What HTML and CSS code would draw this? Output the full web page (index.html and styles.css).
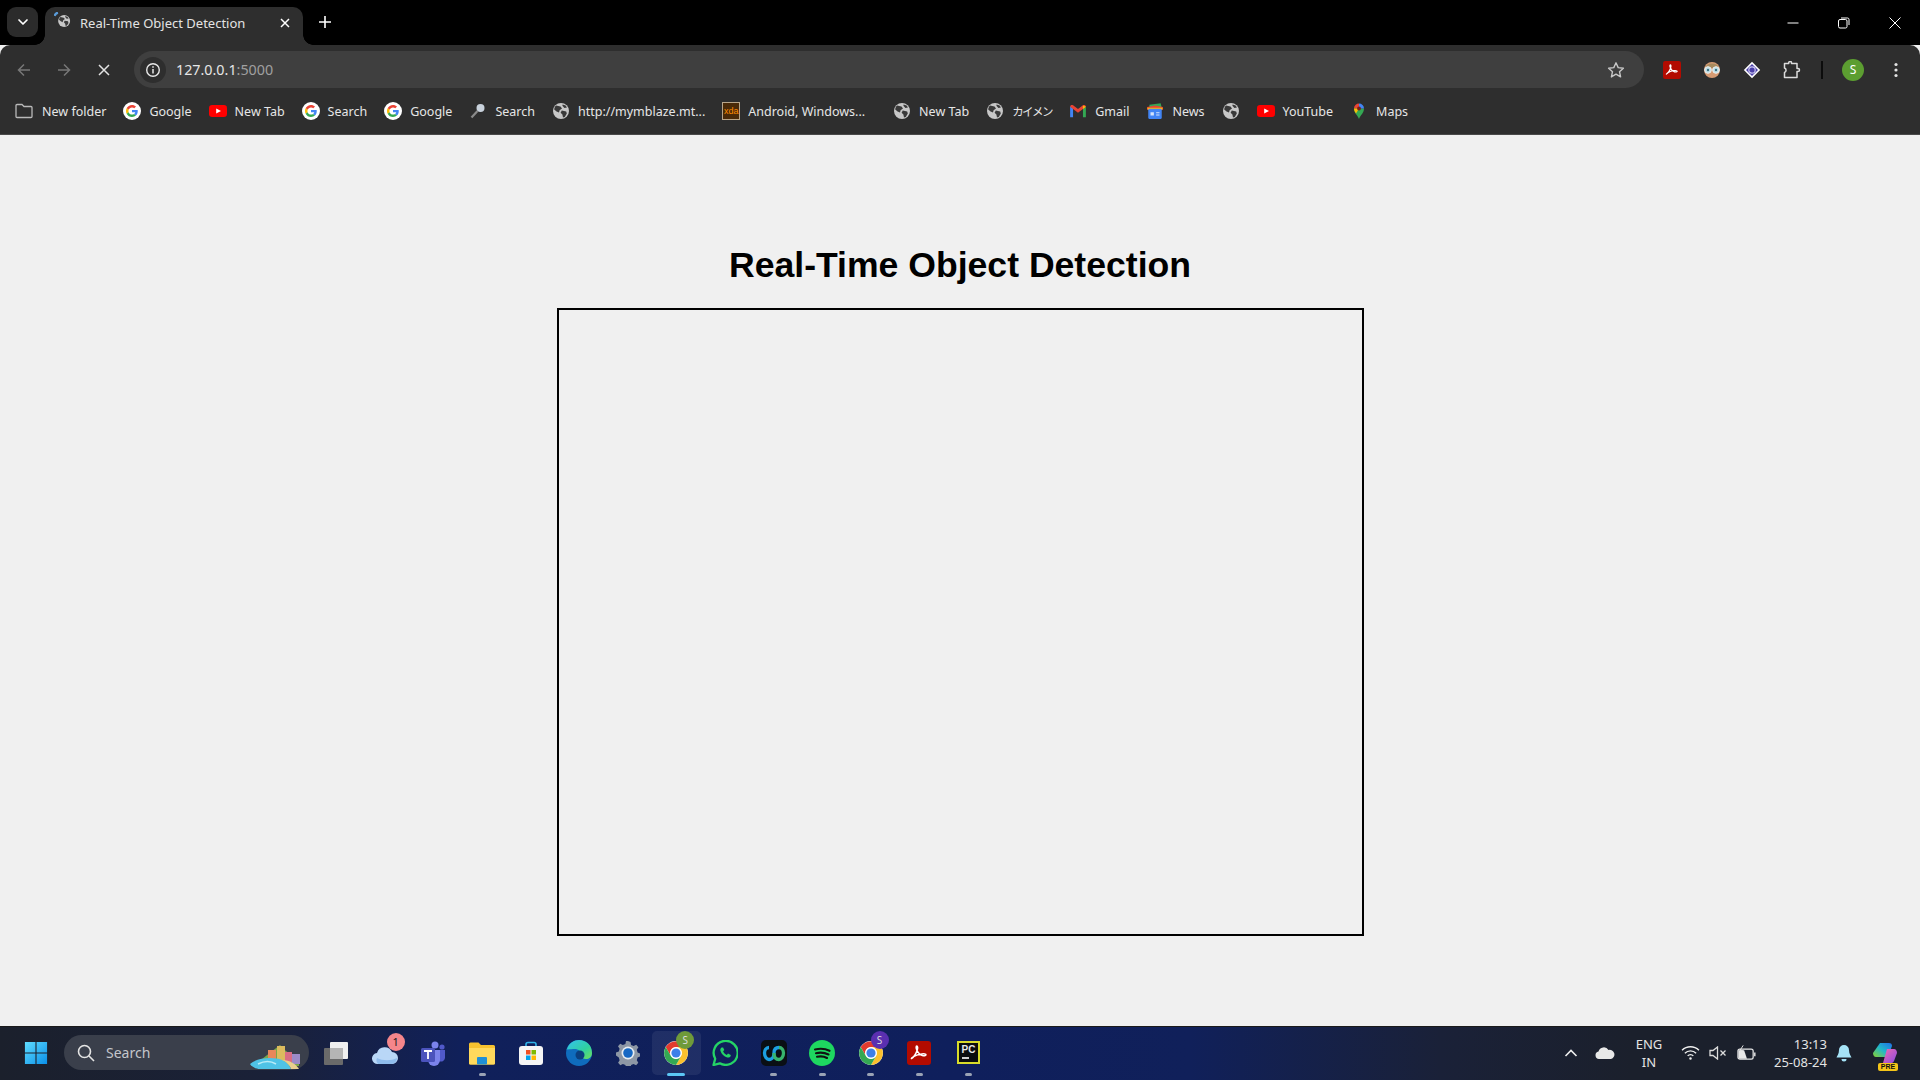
FILE: index.html
```html
<!DOCTYPE html>
<html lang="en">
<head>
<meta charset="utf-8">
<title>Real-Time Object Detection</title>
<link rel="stylesheet" href="styles.css">
</head>
<body>
<svg class="defs" width="0" height="0" aria-hidden="true">
  <symbol id="g" viewBox="-12 -12 72 72">
    <circle cx="24" cy="24" r="36" fill="#fff"/>
    <path fill="#EA4335" d="M24 9.5c3.54 0 6.71 1.22 9.21 3.6l6.85-6.85C35.9 2.38 30.47 0 24 0 14.62 0 6.51 5.38 2.56 13.22l7.98 6.19C12.43 13.72 17.74 9.5 24 9.5z"/>
    <path fill="#4285F4" d="M46.98 24.55c0-1.57-.15-3.09-.38-4.55H24v9.02h12.94c-.58 2.96-2.26 5.48-4.78 7.18l7.73 6c4.51-4.18 7.09-10.36 7.09-17.65z"/>
    <path fill="#FBBC05" d="M10.53 28.59c-.48-1.45-.76-2.99-.76-4.59s.27-3.14.76-4.59l-7.98-6.19C.92 16.46 0 20.12 0 24c0 3.88.92 7.54 2.56 10.78l7.97-6.19z"/>
    <path fill="#34A853" d="M24 48c6.48 0 11.93-2.13 15.89-5.81l-7.73-6c-2.15 1.45-4.92 2.3-8.16 2.3-6.26 0-11.57-4.22-13.47-9.91l-7.98 6.19C6.51 42.62 14.62 48 24 48z"/>
  </symbol>
  <symbol id="yt" viewBox="0 0 18 14">
    <rect x="0" y="1" width="18" height="12" rx="3.2" fill="#f00"/>
    <path d="M7.2 4.4 12 7l-4.8 2.6z" fill="#fff"/>
  </symbol>
  <symbol id="globe" viewBox="-1 -1 18 18">
    <circle cx="8" cy="8" r="8" fill="#c7c7c7"/>
    <path d="M3 2.6 7.500 3.600 9 5.400 6.600 7.200 6 9.600 3.600 8.400 1.200 6.400C1.400 5 2 3.600 3 2.600zM8.800 7.600l4.400.8.6 2.200-2 3.400-1.800.6-.6-3-1.800-1.800zM9.600 1.400l3 1.200 1.400 2-2.600.4-2-2.200z" fill="#3a3a3a"/>
  </symbol>
  <symbol id="chrome" viewBox="0 0 48 48">
    <circle cx="24" cy="24" r="22" fill="#fff"/>
    <path fill="#E33B2E" d="M5 13A22 22 0 0 1 43 13H24A11 11 0 0 0 14.500 29.500Z"/>
    <path fill="#FBC02D" d="M43 13A22 22 0 0 1 24 46L33.500 29.500A11 11 0 0 0 24 13Z"/>
    <path fill="#34A853" d="M24 46A22 22 0 0 1 5 13L14.500 29.500A11 11 0 0 0 33.500 29.500Z"/>
    <circle cx="24" cy="24" r="10.500" fill="#fff"/>
    <circle cx="24" cy="24" r="8.500" fill="#3D7FE8"/>
  </symbol>
  <symbol id="acro" viewBox="0 0 24 24">
    <rect width="24" height="24" rx="3" fill="#b30b00"/>
    <path d="M4.500 17.500c2.500-1.500 5-6 6-9.500.3-1.300.2-3-.7-3s-.9 2 0 4c1.500 3 3.500 5 5.500 5.500 1.800.4 3.700.2 3.700-.7s-2-1.100-4-.9c-3 .3-6 1.200-8 2.500-1.500 1-3 2.400-2.500 2.100z" fill="none" stroke="#fff" stroke-width="1.500" stroke-linejoin="round"/>
  </symbol>
</svg>

<header class="tabstrip">
  <button class="tabsearch" type="button">
    <svg class="i12" viewBox="0 0 12 12"><path d="M2 4l4 4 4-4" fill="none" stroke="#fff" stroke-width="1.700" stroke-linecap="round" stroke-linejoin="round"/></svg>
  </button>
  <div class="tab">
    <svg class="fav" viewBox="0 0 16 16">
      <use href="#globe" x="3" y="2" width="12" height="12"/>
      <path d="M.5 3.500A4.500 4.500 0 0 1 3.500.5" fill="none" stroke="#5a9bd8" stroke-width="2"/>
    </svg>
    <span class="tab-title">Real-Time Object Detection</span>
    <svg class="i12" viewBox="0 0 12 12"><path d="M2 2l8 8M10 2l-8 8" stroke="#fff" stroke-width="1.500"/></svg>
  </div>
  <button class="newtab" type="button">
    <svg class="i12" viewBox="0 0 12 12"><path d="M6 0v12M0 6h12" stroke="#fff" stroke-width="1.600"/></svg>
  </button>
  <div class="winctl">
    <span class="wbtn"><svg class="i12" viewBox="0 0 12 12"><path d="M.5 6h11" stroke="#fff"/></svg></span>
    <span class="wbtn"><svg class="i12" viewBox="0 0 12 12"><rect x=".5" y="2.500" width="8.500" height="8.500" rx="1.500" fill="none" stroke="#fff"/><path d="M3 1h6.500A1.500 1.500 0 0 1 11 2.500V8" fill="none" stroke="#fff"/></svg></span>
    <span class="wbtn"><svg class="i12" viewBox="0 0 12 12"><path d="M.5.500l11 11M11.500.500l-11 11" stroke="#fff"/></svg></span>
  </div>
</header>

<nav class="toolbar">
  <span class="tbtn"><svg class="i16" viewBox="0 0 16 16"><path d="M14 8H2.500M8 2.500 2.500 8 8 13.500" fill="none" stroke="#777" stroke-width="1.500"/></svg></span>
  <span class="tbtn"><svg class="i16" viewBox="0 0 16 16"><path d="M2 8h11.500M8 2.500 13.500 8 8 13.500" fill="none" stroke="#777" stroke-width="1.500"/></svg></span>
  <span class="tbtn"><svg class="i12" viewBox="0 0 12 12"><path d="M1 1l10 10M11 1 1 11" stroke="#e3e3e3" stroke-width="1.500"/></svg></span>
  <div class="omnibox">
    <span class="chip"><svg class="i16" viewBox="0 0 16 16"><circle cx="8" cy="8" r="6.300" fill="none" stroke="#e8e8e8" stroke-width="1.400"/><path d="M8 7v4.500M8 4.300v1.500" stroke="#e8e8e8" stroke-width="1.500"/></svg></span>
    <span class="url">127.0.0.1<span class="port">:5000</span></span>
    <svg class="star" viewBox="0 0 18 18"><path d="M9 1.800l2.200 4.800 5.200.6-3.900 3.500 1.100 5.200L9 13.200l-4.600 2.700 1.100-5.200L1.600 7.200l5.200-.6z" fill="none" stroke="#c7c7c7" stroke-width="1.400" stroke-linejoin="round"/></svg>
  </div>
  <div class="exts">
    <span class="tbtn"><svg class="i18" viewBox="0 0 24 24"><use href="#acro"/></svg></span>
    <span class="tbtn"><svg class="i18" viewBox="0 0 18 18">
      <circle cx="9" cy="9" r="8" fill="#d69b73"/><path d="M2 7a7.500 7 0 0 1 14 0z" fill="#a88a5e"/>
      <circle cx="5" cy="9" r="3.300" fill="#bfe0e8" stroke="#eee"/><circle cx="13" cy="9" r="3.300" fill="#bfe0e8" stroke="#eee"/>
      <circle cx="5" cy="9" r="1.200" fill="#3b6f80"/><circle cx="13" cy="9" r="1.200" fill="#3b6f80"/>
    </svg></span>
    <span class="tbtn"><svg class="i18" viewBox="0 0 18 18">
      <path d="M9 .8 17.200 9 9 17.200.8 9z" fill="#fff"/><path d="M9 3 15 9 9 15 3 9z" fill="#4a3fa8"/>
      <circle cx="9" cy="9" r="3.200" fill="none" stroke="#c9c4f0" stroke-width="1.200"/>
    </svg></span>
    <span class="tbtn"><svg class="i18" viewBox="0 0 18 18"><path d="M1.500 2.500h4.200V1.800a1.400 1.400 0 0 1 2.800 0v.7h5.500v5h1a1.500 1.500 0 0 1 0 3h-1v6H1.500v-5a2.400 2.400 0 0 0 0-4.500z" fill="none" stroke="#dcdcdc" stroke-width="1.500" stroke-linejoin="round"/></svg></span>
  </div>
  <span class="vsep"></span>
  <span class="tbtn"><span class="avatar">S</span></span>
  <span class="tbtn tbtn-menu"><svg class="i16" viewBox="0 0 16 16"><circle cx="8" cy="2.500" r="1.600" fill="#e3e3e3"/><circle cx="8" cy="8" r="1.600" fill="#e3e3e3"/><circle cx="8" cy="13.500" r="1.600" fill="#e3e3e3"/></svg></span>
</nav>

<div class="bookmarks">
  <span class="bm bm-folder"><svg class="bi" viewBox="0 0 18 16"><path d="M1 2.500A1 1 0 0 1 2 1.500h5l2 2h7a1 1 0 0 1 1 1v9a1 1 0 0 1-1 1H2a1 1 0 0 1-1-1z" fill="none" stroke="#b9b9b9" stroke-width="1.300"/></svg>New folder</span>
  <span class="bm"><svg class="bi"><use href="#g"/></svg>Google</span>
  <span class="bm"><svg class="bi"><use href="#yt"/></svg>New Tab</span>
  <span class="bm"><svg class="bi"><use href="#g"/></svg>Search</span>
  <span class="bm"><svg class="bi"><use href="#g"/></svg>Google</span>
  <span class="bm"><svg class="bi" viewBox="0 0 18 18"><circle cx="11.500" cy="6" r="4" fill="#c9d2dc"/><path d="M8.500 9 2.500 15.500" stroke="#8a8a8a" stroke-width="2.200"/></svg>Search</span>
  <span class="bm"><svg class="bi"><use href="#globe"/></svg>http://mymblaze.mt...</span>
  <span class="bm bm-xda"><span class="xda">xda</span>Android, Windows...</span>
  <span class="bm"><svg class="bi"><use href="#globe"/></svg>New Tab</span>
  <span class="bm"><svg class="bi"><use href="#globe"/></svg><span class="ja">カイメン</span></span>
  <span class="bm"><svg class="bi" viewBox="0 0 16 16">
    <path d="M1 13.500V4l2.600 1.800v7.700z" fill="#4285F4"/><path d="M15 13.500V4l-2.600 1.800v7.700z" fill="#34A853"/>
    <path d="M1 4.200c0-1.500 1.500-2 2.600-1.300L8 6.200l4.400-3.300c1.100-.7 2.600-.2 2.600 1.300l-2.600 2L8 9.500 3.600 6.200z" fill="#EA4335"/>
    <path d="M12.400 3 15 4.200l-2.600 2z" fill="#FBBC05"/>
  </svg>Gmail</span>
  <span class="bm"><svg class="bi" viewBox="0 0 16 16">
    <path d="M3 2.500 13 1l1 4H3z" fill="#34A853"/><path d="M1 4.500 8 3l7 1.500V7H1z" fill="#EA4335"/><path d="M1 5h14l-1 2H2z" fill="#FBBC05"/>
    <rect x="2" y="6" width="12" height="9" rx="1" fill="#4285F4"/><path d="M4 9h3v3H4zM9 9h3v1H9zM9 11h3v1H9z" fill="#d5e4fb"/>
  </svg>News</span>
  <span class="bm bm-icon"><svg class="bi"><use href="#globe"/></svg></span>
  <span class="bm"><svg class="bi"><use href="#yt"/></svg>YouTube</span>
  <span class="bm"><svg class="bi" viewBox="0 0 16 18">
    <path d="M8 17C6.500 13 3 11 3 6.500h10C13 11 9.500 13 8 17z" fill="#34A853"/>
    <path d="M3 6.500A5 5 0 0 1 8 1.500V6.500z" fill="#EA4335"/><path d="M8 1.500A5 5 0 0 1 13 6.500H8z" fill="#4285F4"/>
    <path d="M3 6.500c0 2 1 3.500 2 5l3-5z" fill="#FBBC05"/><circle cx="8" cy="6.500" r="1.900" fill="#7a1f18"/>
  </svg>Maps</span>
</div>

<main class="page">
  <h1 class="title">Real-Time Object Detection</h1>
  <div class="video"></div>
</main>

<footer class="taskbar">
  <span class="task task-start"><svg class="i24" viewBox="0 0 26 26">
    <defs><linearGradient id="win" x1="0" y1="0" x2="1" y2="1"><stop offset="0" stop-color="#5fdcff"/><stop offset="1" stop-color="#0a8fe8"/></linearGradient></defs>
    <path d="M1 1h11.400v11.400H1zM13.600 1H25v11.400H13.600zM1 13.600h11.400V25H1zM13.600 13.600H25V25H13.600z" fill="url(#win)"/>
  </svg></span>
  <div class="search">
    <svg class="i18" viewBox="0 0 18 18"><circle cx="7.500" cy="7.500" r="6" fill="none" stroke="#e4e4e4" stroke-width="1.600"/><path d="M12 12l5 5" stroke="#e4e4e4" stroke-width="1.600"/></svg>
    <span class="search-text">Search</span>
    <svg class="scene" viewBox="0 0 52 30">
      <path d="M12 19 30 5l6 6 13 9v6H14z" fill="#7ca648"/>
      <rect x="18" y="10" width="8" height="10" fill="#e8875a"/><rect x="27" y="6" width="8" height="15" fill="#dcbb5e"/>
      <rect x="35" y="12" width="7" height="10" fill="#d96d84"/><rect x="42" y="14" width="8" height="10" fill="#9c8bc8"/>
      <path d="M0 24C8 17 24 17 32 20c5 2 8 6 9 9H10C6 29 2 27 0 24z" fill="#4fc3e6"/>
      <path d="M32 20c5 2 8 6 9 9h8c-3-5-9-9-17-9z" fill="#e9cf8f"/>
      <path d="M8 24c6-3 13-3 18 0" fill="none" stroke="#b9ecf7" stroke-width="1.500"/>
    </svg>
  </div>
  <span class="task"><svg class="i26" viewBox="0 0 26 26"><rect x="1" y="8" width="19" height="17" rx="1" fill="#6a6a6a"/><rect x="7" y="2" width="18" height="17" rx="1" fill="#f0f0f0"/><rect x="7" y="8" width="13" height="11" fill="#b5b5b5"/></svg></span>
  <span class="task"><svg class="i26" viewBox="0 0 26 26"><path d="M6 24a5.500 5.500 0 0 1-1-11 8 8 0 0 1 15-1 5.800 5.800 0 0 1 0 12z" fill="#b9d7f7"/><path d="M6 24a5.500 5.500 0 0 1-1-6c6 3 14 3 20 0a5.800 5.800 0 0 1-5 6z" fill="#8fbcec"/></svg><span class="badge">1</span></span>
  <span class="task"><svg class="i26" viewBox="0 0 26 26"><circle cx="15" cy="5" r="3.500" fill="#7b83eb"/><circle cx="22" cy="7" r="2.600" fill="#5059c9"/><path d="M17 10h8v8a4 4 0 0 1-6 3z" fill="#5059c9"/><path d="M8 10h12v10a6 6 0 0 1-12 0z" fill="#7b83eb"/><rect x="1" y="8" width="14" height="14" rx="1.500" fill="#4b53bc"/><path d="M4 11h8M8 11v8" stroke="#fff" stroke-width="1.800"/></svg></span>
  <span class="task task-on"><svg class="i26" viewBox="0 0 26 26"><path d="M0 4a1.500 1.500 0 0 1 1.500-1.500h8L12 5h12.500A1.500 1.500 0 0 1 26 6.500V23a1.500 1.500 0 0 1-1.500 1.500h-23A1.500 1.500 0 0 1 0 23z" fill="#f7c22f"/><path d="M0 8h26v15a1.500 1.500 0 0 1-1.500 1.500h-23A1.500 1.500 0 0 1 0 23z" fill="#ffd95c"/><rect x="8" y="17" width="10" height="7.500" rx="1" fill="#1f8fd6"/></svg></span>
  <span class="task"><svg class="i26" viewBox="0 0 26 26"><path d="M8 7V4.500a2 2 0 0 1 2-2h6a2 2 0 0 1 2 2V7" fill="none" stroke="#2fb4e8" stroke-width="1.600"/><rect x="1" y="6" width="24" height="19" rx="3" fill="#f5f5f5"/><rect x="8" y="10" width="4.500" height="4.500" fill="#f25022"/><rect x="13.500" y="10" width="4.500" height="4.500" fill="#7fba00"/><rect x="8" y="15.500" width="4.500" height="4.500" fill="#00a4ef"/><rect x="13.500" y="15.500" width="4.500" height="4.500" fill="#ffb900"/></svg></span>
  <span class="task"><svg class="i26" viewBox="0 0 26 26">
    <defs><linearGradient id="edge" x1="0" y1="0" x2="1" y2="1"><stop offset="0" stop-color="#35c1f1"/><stop offset=".6" stop-color="#2fd0a0"/><stop offset="1" stop-color="#6fe05a"/></linearGradient></defs>
    <circle cx="13" cy="13" r="13" fill="#0f6cbd"/><path d="M1 9C3 3 8 0 13 0c7 0 13 5 13 13 0 4-3 6-6 6-3 0-5-2-5-4 0-4-3-6-6-6-4 0-8 1-9 0z" fill="url(#edge)"/><circle cx="14" cy="15" r="4.500" fill="#0b3f7e"/>
  </svg></span>
  <span class="task"><svg class="i26" viewBox="0 0 26 26"><path d="M13 1l2.500 1 .6 3 2.500 1.100 2.600-1.400 2.200 2.600-1.600 2.400.8 2.800 2.400.9v3.200l-2.400 1-.8 2.700 1.500 2.400-2.200 2.500-2.600-1.300-2.400 1-.6 3H11l-.6-3-2.500-1-2.600 1.300-2.200-2.500 1.500-2.400-.8-2.700L1 15.600v-3.200l2.800-.9.800-2.800L3 6.300l2.200-2.600 2.600 1.400 2.600-1.100.6-3z" fill="#8d97a5"/><circle cx="13" cy="13" r="6.500" fill="#e8edf2"/><circle cx="13" cy="13" r="4.800" fill="#1668c4"/></svg></span>
  <span class="task task-active"><svg class="i26"><use href="#chrome"/></svg><span class="pbadge pb-green">S</span></span>
  <span class="task"><svg class="i26" viewBox="0 0 26 26"><path d="M1.500 25l1.700-6.300A12 12 0 1 1 7.800 23.300z" fill="none" stroke="#25d366" stroke-width="2.300" stroke-linejoin="round"/><path d="M9.500 7.500c-1 .8-1.500 2-1 3.500 1 3 3.500 5.500 6.700 6.500 1.500.4 2.800-.2 3.400-1.300l.2-1.200-2.800-1.400-1.200 1.300c-1.700-.7-3-2.100-3.700-3.700l1.200-1.100-1.200-2.700z" fill="#25d366"/></svg></span>
  <span class="task task-on"><svg class="i26" viewBox="0 0 26 26"><rect width="26" height="26" rx="5" fill="#0a0f14"/><path d="M8 7.500c-3 0-4.500 3-4.500 5.500 0 4 2.500 6.500 4.500 6.500 4 0 5-4.500 5-6.500 0-4 2-5.500 5-5.500" fill="none" stroke="#1c9fe0" stroke-width="3.300"/><path d="M13 13c0 3 1 6.500 5 6.500 2 0 4.500-2.500 4.500-6.500 0-3-2-5.500-4.500-5.500" fill="none" stroke="#37b46d" stroke-width="3.300"/></svg></span>
  <span class="task task-on"><svg class="i26" viewBox="0 0 26 26"><circle cx="13" cy="13" r="13" fill="#1ed760"/><path d="M6 9.500c5-1.300 10-1 14.500 1.300M7 13.200c4.300-1 8.500-.7 12.500 1.300M8 16.800c3.500-.8 7-.5 10 1.200" fill="none" stroke="#111" stroke-width="2.100" stroke-linecap="round"/></svg></span>
  <span class="task task-on"><svg class="i26"><use href="#chrome"/></svg><span class="pbadge pb-purple">S</span></span>
  <span class="task task-on"><svg class="i24" viewBox="0 0 24 24"><use href="#acro"/></svg></span>
  <span class="task task-on"><span class="pycharm"><span class="pc">PC</span><span class="pc-line"></span></span></span>
  <div class="tray">
    <svg class="tray-chev" viewBox="0 0 14 8"><path d="M1.500 7 7 1.500 12.500 7" fill="none" stroke="#eee" stroke-width="1.600"/></svg>
    <svg class="tray-cloud" viewBox="0 0 20 12"><path d="M4 12a3.800 3.800 0 0 1-.5-7.500A5.500 5.500 0 0 1 13.500 3 4.600 4.600 0 0 1 16 12z" fill="#e8e8e8"/></svg>
    <span class="lang"><span>ENG</span><span>IN</span></span>
    <svg class="tray-wifi" viewBox="0 0 20 16"><path d="M1 5.500a13 13 0 0 1 18 0M4 8.700a8.500 8.500 0 0 1 12 0M7 11.600a4 4 0 0 1 6 0" fill="none" stroke="#eee" stroke-width="1.500"/><circle cx="10" cy="14.300" r="1.300" fill="#eee"/></svg>
    <svg class="tray-vol" viewBox="0 0 18 14"><path d="M1 4.500h3L8.500 1v12L4 9.500H1z" fill="none" stroke="#ddd" stroke-width="1.300"/><path d="M11.500 4.500l5 5M16.500 4.500l-5 5" stroke="#ddd" stroke-width="1.300"/></svg>
    <svg class="tray-batt" viewBox="0 0 20 16"><rect x="1" y="4" width="16" height="10.500" rx="2" fill="none" stroke="#e8e8e8" stroke-width="1.300"/><path d="M1.500 5h6l3 9h-9z" fill="#e8e8e8"/><path d="M18 7.500h1.500v4H18z" fill="#e8e8e8"/><path d="M6.500 0 3 5.500h3L4.500 9" fill="none" stroke="#e8e8e8"/></svg>
    <span class="clock"><span>13:13</span><span>25-08-24</span></span>
    <svg class="tray-bell" viewBox="0 0 16 18"><path d="M8 1a5 5 0 0 1 5 5c0 4 2 6 2.500 7.500h-15C1 12 3 10 3 6a5 5 0 0 1 5-5z" fill="#a5e3f7"/><path d="M5.500 15a2.500 2.500 0 0 0 5 0z" fill="#a5e3f7"/></svg>
    <span class="copilot">
      <svg class="i26" viewBox="0 0 26 22">
        <defs><linearGradient id="cp1" x1="0" y1="1" x2="1" y2="0"><stop offset="0" stop-color="#8bd12e"/><stop offset=".5" stop-color="#21b8c9"/><stop offset="1" stop-color="#1f6fe8"/></linearGradient><linearGradient id="cp2" x1="0" y1="0" x2="1" y2="1"><stop offset="0" stop-color="#f06ab0"/><stop offset="1" stop-color="#8a4be0"/></linearGradient></defs>
        <path d="M8 1h9c2 0 3 1 3 3l-4 11H4c-2 0-3-2-3-4z" fill="url(#cp1)"/><path d="M15 7h7c2 0 3 2 3 4l-3 8c-1 2-2 2-3 2h-8z" fill="url(#cp2)"/>
      </svg>
      <span class="pre">PRE</span>
    </span>
  </div>
</footer>
</body>
</html>
```

FILE: styles.css
```css
* { box-sizing: border-box; }
html, body { height: 100%; margin: 0; }
body {
  display: flex;
  flex-direction: column;
  height: 1080px;
  overflow: hidden;
  background: #f0f0f0;
  font-family: "Noto Sans", "Noto Sans CJK JP", sans-serif;
  color: #e6e6e6;
}
.defs { position: absolute; }
svg { display: block; flex: none; }
button { border: 0; padding: 0; background: none; }
.i12 { width: 12px; height: 12px; }
.i16 { width: 16px; height: 16px; }
.i18 { width: 18px; height: 18px; }
.i24 { width: 24px; height: 24px; }
.i26 { width: 26px; height: 26px; }

/* tab strip */
.tabstrip {
  display: flex;
  align-items: flex-start;
  height: 45px;
  padding: 7px 0 0 7px;
  background: #000;
  flex: none;
}
.tabsearch {
  display: flex;
  align-items: center;
  justify-content: center;
  width: 31px;
  height: 30px;
  border-radius: 9px;
  background: #2b2b2b;
}
.tab {
  position: relative;
  display: flex;
  align-items: center;
  width: 258px;
  height: 38px;
  margin-left: 7px;
  padding: 0 12px 7px 9px;
  border-radius: 10px 10px 0 0;
  background: #2e2e2e;
  font-size: 13px;
}
.tab::before,
.tab::after {
  content: "";
  position: absolute;
  bottom: 0;
  width: 10px;
  height: 10px;
}
.tab::before { left: -10px; background: radial-gradient(circle at 0 0, #000 9.5px, #2e2e2e 10px); }
.tab::after { right: -10px; background: radial-gradient(circle at 100% 0, #000 9.5px, #2e2e2e 10px); }
.fav { width: 18px; height: 18px; margin-right: 8px; margin-top: -4px; }
.tab-title { flex: 1; white-space: nowrap; color: #e3e3e3; }
.newtab {
  display: flex;
  align-items: center;
  justify-content: center;
  width: 30px;
  height: 30px;
  margin-left: 7px;
}
.winctl { display: flex; margin-left: auto; margin-top: -7px; }
.wbtn { display: flex; align-items: center; justify-content: center; width: 51px; height: 45px; }

/* toolbar */
.toolbar {
  display: flex;
  align-items: center;
  height: 47px;
  padding: 0 4px;
  background: #2e2e2e;
  border-radius: 10px 10px 0 0;
  margin-bottom: -1px;
  flex: none;
}
.tbtn { display: flex; align-items: center; justify-content: center; width: 40px; height: 37px; flex: none; }
.omnibox {
  display: flex;
  align-items: center;
  flex: 1;
  height: 37px;
  margin: 2px 0 0 10px;
  padding: 0 19px 0 6px;
  border-radius: 19px;
  background: #3f3f3f;
}
.toolbar > .tbtn, .exts, .vsep { margin-top: 2px; }
.chip {
  display: flex;
  align-items: center;
  justify-content: center;
  width: 26px;
  height: 26px;
  border-radius: 50%;
  background: #2e2e2e;
}
.url { margin-left: 10px; flex: 1; font-size: 14.300px; color: #e6e6e6; white-space: nowrap; }
.port { color: #a0a0a0; }
.star { width: 18px; height: 18px; }
.exts { display: flex; margin-left: 8px; }
.vsep { width: 2px; height: 18px; margin-left: 9px; margin-right: 10px; background: #0c0c0c; flex: none; }
.tbtn-menu { margin-left: 3px; }
.avatar {
  display: flex;
  align-items: center;
  justify-content: center;
  width: 22px;
  height: 22px;
  border-radius: 50%;
  background: #5c9e31;
  color: #fff;
  font-size: 12px;
}

/* bookmarks */
.bookmarks {
  display: flex;
  align-items: center;
  gap: 17px;
  height: 44px;
  padding: 0 0 3px 15px;
  background: #2e2e2e;
  border-bottom: 1px solid #4a4a4a;
  flex: none;
  font-size: 12.500px;
  color: #e6e6e6;
  white-space: nowrap;
}
.bm { display: flex; align-items: center; gap: 8px; }
.bm-folder { gap: 9px; }
.bi { width: 18px; height: 18px; }
.ja { font-size: 11.500px; letter-spacing: -1.500px; }
.xda {
  display: flex;
  align-items: center;
  justify-content: center;
  width: 18px;
  height: 18px;
  background: #4a2a08;
  border: 1px solid #b9a68a;
  color: #ff8a00;
  font: 9px "Liberation Sans", sans-serif;
}
.bm-xda { margin-right: 11px; }

/* page */
.page {
  display: flex;
  flex-direction: column;
  align-items: center;
  flex: 1;
  padding-top: 110px;
  background: #f0f0f0;
}
.title {
  margin: 0 0 22px;
  font: bold 35.600px/41px "Liberation Sans", Arial, sans-serif;
  color: #000;
}
.video {
  width: 807px;
  height: 628px;
  border: 2px solid #000;
  flex: none;
}

/* taskbar */
.taskbar {
  display: flex;
  align-items: center;
  height: 54px;
  padding: 0 0 2px 12px;
  flex: none;
  background: linear-gradient(90deg, #1b202c 0%, #1a2138 14%, #10205a 24%, #0f1f5c 50%, #10205a 62%, #1a2138 75%, #1b202c 85%);
  border-top: 1px solid #1a1a1a;
  color: #e4e4e4;
}
.task {
  position: relative;
  display: flex;
  align-items: center;
  justify-content: center;
  width: 48.600px;
  height: 44px;
  flex: none;
}
.task-start { width: 48px; }
.task-on::after,
.task-active::after {
  content: "";
  position: absolute;
  left: 50%;
  bottom: -1px;
  width: 7px;
  height: 3px;
  margin-left: -3.500px;
  border-radius: 2px;
  background: #9aa3b5;
}
.task-active { background: rgba(255, 255, 255, .07); border-radius: 5px; }
.task-active::after { width: 18px; margin-left: -9px; background: #5cc6f5; }
.search {
  display: flex;
  align-items: center;
  width: 245px;
  height: 35px;
  margin: 0 3px 0 4px;
  padding: 0 7px 0 13px;
  border-radius: 18px;
  background: #3a3f4b;
  flex: none;
}
.search-text { flex: 1; margin-left: 11px; font-size: 14px; color: #c4c6cb; }
.scene { width: 52px; height: 30px; margin-top: 4px; }
.badge {
  position: absolute;
  top: 2px;
  left: 26px;
  width: 18px;
  height: 18px;
  border-radius: 50%;
  background: #f5868b;
  color: #1a1a1a;
  font-size: 11px;
  line-height: 18px;
  text-align: center;
}
.pbadge {
  position: absolute;
  top: 0;
  left: 24px;
  width: 18px;
  height: 18px;
  border-radius: 50%;
  color: #ddd;
  font-size: 10px;
  line-height: 18px;
  text-align: center;
}
.pb-green { background: #6f9a3a; }
.pb-purple { background: #5a2fb0; }
.pycharm {
  display: flex;
  flex-direction: column;
  justify-content: space-between;
  width: 23px;
  height: 23px;
  padding: 2px 3px 3px;
  background: #0b0d0e;
  border: 2px solid #d9dc2a;
}
.pc { font: bold 10px/10px "Liberation Sans", sans-serif; color: #e8e8e8; }
.pc-line { width: 7px; height: 2px; background: #cfcfcf; }
.tray { display: flex; align-items: center; margin-left: auto; flex: none; }
.tray-chev { width: 14px; height: 8px; margin-right: 17px; }
.tray-cloud { width: 20px; height: 12px; margin-right: 20px; }
.lang, .clock { display: flex; flex-direction: column; font-size: 13px; line-height: 18px; }
.lang { align-items: center; width: 28px; margin-right: 18px; }
.tray-wifi { width: 19px; height: 15px; margin-right: 9px; }
.tray-vol { width: 18px; height: 14px; margin-right: 10px; }
.tray-batt { width: 19px; height: 16px; }
.clock { align-items: flex-end; width: 71px; }
.tray-bell { width: 16px; height: 18px; margin: 0 20px 0 9px; }
.copilot { position: relative; display: block; width: 26px; margin-right: 22px; }
.pre {
  position: absolute;
  left: 6px;
  bottom: -5px;
  width: 20px;
  height: 8px;
  border-radius: 2px;
  background: #f5c518;
  color: #111;
  font: bold 7px/8px "Liberation Sans", sans-serif;
  text-align: center;
}
```
